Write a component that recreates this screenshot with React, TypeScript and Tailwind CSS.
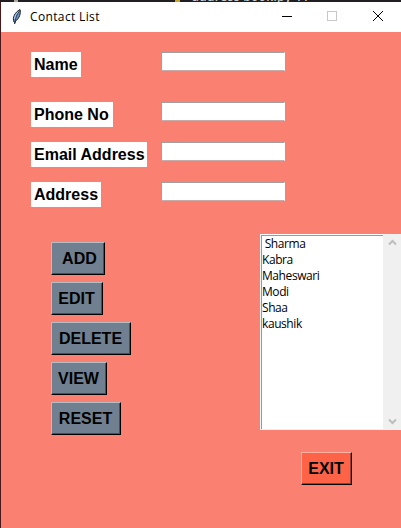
import React from 'react';

const buttonFace =
  "flex h-[33px] items-center justify-center whitespace-pre border border-r-black border-b-black pt-px pr-px font-['Liberation_Sans',sans-serif] text-base font-bold leading-none text-black";

const fields = [
  { label: 'Name', width: 'w-[50px]', gap: 'mb-[25px]' },
  { label: 'Phone No', width: 'w-[82px]', gap: 'mb-[15px]' },
  { label: 'Email Address', width: 'w-[116px]', gap: 'mb-[15px]' },
  { label: 'Address', width: 'w-[70px]', gap: '' },
];

const actions = [
  { label: ' ADD', width: 'w-[54px]' },
  { label: 'EDIT', width: 'w-[52px]' },
  { label: 'DELETE', width: 'w-[80px]' },
  { label: 'VIEW', width: 'w-[56px]' },
  { label: 'RESET', width: 'w-[70px]' },
];

const contacts = [' Sharma', 'Kabra', 'Maheswari', 'Modi', 'Shaa', 'kaushik'];

function Feather() {
  return (
    <svg width="12" height="18" viewBox="0 0 12 18" className="shrink-0">
      <path d="M3 14 C1.2 10 3.5 4.5 9 1.5 C10 5 8.5 10.5 4.5 13 L3.6 16" fill="#6f95c4" stroke="#17202c" strokeWidth="1" />
      <path d="M8.3 3 C5.5 7 4.6 10 3.6 15.5" fill="none" stroke="#17202c" strokeWidth="0.8" />
      <path d="M7.4 3.6 C5 5.8 3.9 8 3.5 11" fill="none" stroke="#c2daf2" strokeWidth="0.9" />
    </svg>
  );
}

function TitleBar() {
  return (
    <header className="flex h-[30px] items-center bg-white pl-2.5">
      <Feather />
      <h1 className="ml-[7px] grow font-['Open_Sans','Noto_Sans',sans-serif] text-xs tracking-[0.36px] text-black">Contact List</h1>
      <svg width="120" height="30" viewBox="0 0 120 30" fill="none" shapeRendering="crispEdges">
        <path d="M1 14.5H11" stroke="#000" />
        <rect x="46.5" y="9.5" width="9" height="9" stroke="#c8c8c8" />
        <path d="M92 9L102 19M102 9L92 19" stroke="#000" shapeRendering="auto" />
      </svg>
    </header>
  );
}

function Scrollbar() {
  return (
    <div className="flex w-[17px] flex-col items-center justify-between bg-[#f0f0f0] py-[5px]">
      <svg width="9" height="7" viewBox="0 0 9 7" fill="none" stroke="#bdbdbd" strokeWidth="2">
        <path d="M1 5.5L4.5 2L8 5.5" />
      </svg>
      <svg width="9" height="7" viewBox="0 0 9 7" fill="none" stroke="#bdbdbd" strokeWidth="2">
        <path d="M1 1.5L4.5 5L8 1.5" />
      </svg>
    </div>
  );
}

export default function App() {
  return (
    <div className="flex h-[528px] w-[401px] flex-col overflow-hidden bg-[#fa8072]">
      <div className="flex h-0.5 shrink-0 items-end overflow-hidden bg-[#201e20] pl-[14px]">
        <span className="h-0.5 w-1 bg-[#a9a9a0]" />
        <span className="ml-[157px] h-0.5 w-[5px] bg-[#c9a52c]" />
        <span className="ml-[12px] whitespace-pre font-['Open_Sans',sans-serif] text-xs font-semibold leading-[10px] tracking-[0.3px] text-[#ccc]">address book.py 11</span>
      </div>
      <div className="flex grow flex-col border-l border-[#4b1718]">
        <TitleBar />
        <main className="flex grow flex-col">
          <section className="flex pt-5 pl-[30px]">
            <div className="w-[130px]">
              {fields.map((f) => (
                <div
                  key={f.label}
                  className={`flex h-[25px] items-center whitespace-nowrap bg-white pl-[3px] font-['Liberation_Sans',sans-serif] text-base font-bold leading-none text-black ${f.width} ${f.gap}`}
                >
                  {f.label}
                </div>
              ))}
            </div>
            <div>
              {fields.map((f) => (
                <div key={f.label} className={`h-[25px] ${f.gap}`}>
                  <input
                    aria-label={f.label}
                    className="block h-[19px] w-[124px] border border-t-[#a0a0a0] border-r-white border-b-[#c9aaa6] border-l-[#a0a0a0] bg-white outline-none"
                  />
                </div>
              ))}
            </div>
          </section>
          <section className="mt-[27px] flex justify-between">
            <div className="flex flex-col items-start gap-[7px] pt-2 pl-[50px]">
              {actions.map((a) => (
                <button
                  key={a.label}
                  className={`${buttonFace} ${a.width} border-t-[#b5bdc5] border-l-[#b5bdc5] bg-[#708090] shadow-[inset_-1px_-1px_0_#46505a]`}
                >
                  {a.label}
                </button>
              ))}
            </div>
            <div className="flex h-[196px]">
              <div className="w-[124px] border border-white border-r-[#f0f0f0] border-b-[#f0f0f0]">
                <ul className="h-full border-t border-l border-[#999] bg-white font-['Open_Sans','Noto_Sans',sans-serif] text-xs leading-4 tracking-[-0.42px] text-black">
                  {contacts.map((c) => (
                    <li key={c} className="h-4 whitespace-pre">{c}</li>
                  ))}
                </ul>
              </div>
              <Scrollbar />
            </div>
          </section>
          <button className={`${buttonFace} mt-[17px] ml-[300px] w-[51px] border-t-[#ffb0a0] border-l-[#ffb0a0] bg-[#ff6347] shadow-[inset_-1px_-1px_0_#a03e2c]`}>
            EXIT
          </button>
        </main>
      </div>
    </div>
  );
}
